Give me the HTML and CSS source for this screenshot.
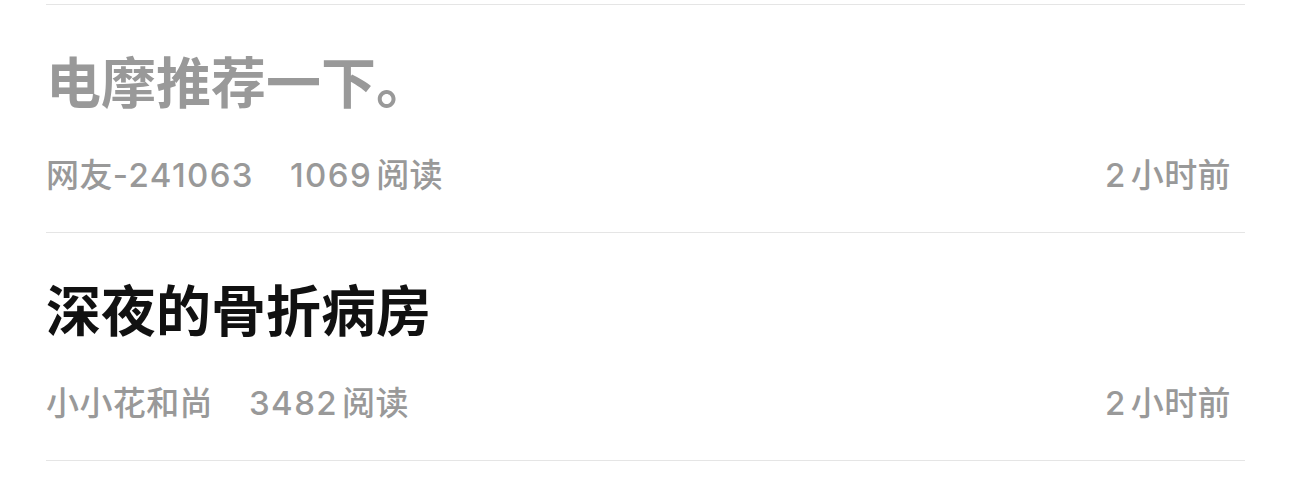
FILE: index.html
```html
<!DOCTYPE html>
<html>
<head>
    <title>帖子列表</title>
    <link rel="stylesheet" href="styles.css">
</head>
<body>
    <div class="post-list">
        <div class="post-item visited">
            <h2 class="post-title">电摩推荐一下。</h2>
            <div class="post-meta">
                <span class="author">网友-<span class="num">241063</span></span>
                <span class="reads"><span class="num">1069</span>阅读</span>
                <span class="time"><span class="num">2</span>小时前</span>
            </div>
        </div>
        <div class="post-item">
            <h2 class="post-title">深夜的骨折病房</h2>
            <div class="post-meta">
                <span class="author">小小花和尚</span>
                <span class="reads"><span class="num">3482</span>阅读</span>
                <span class="time"><span class="num">2</span>小时前</span>
            </div>
        </div>
    </div>
</body>
</html>
```

FILE: styles.css
```css
body {
    margin: 0;
    background-color: #fff;
    font-family: "Noto Sans CJK SC", "Noto Sans", sans-serif;
}
.post-list {
    padding: 4px 0 0 46px;
    width: 1199px;
}
.post-item {
    border-top: 1px solid #e5e5e5;
    padding: 36px 14px 35px 0;
}
.post-item:last-child {
    border-bottom: 1px solid #e5e5e5;
}
.post-title {
    margin: 0;
    font-size: 55px;
    line-height: 76px;
    font-weight: 700;
    color: #111;
}
.visited .post-title {
    color: #999;
}
.post-meta {
    display: flex;
    margin-top: 36px;
    font-family: Inter, "Noto Sans CJK SC", sans-serif;
    font-size: 33px;
    line-height: 44px;
    font-weight: 500;
    letter-spacing: 0.4px;
    color: #999;
}
.num {
    letter-spacing: 1.4px;
    margin-right: 4px;
}
.author .num {
    margin-right: 0;
}
.reads {
    margin-left: 36px;
}
.time {
    margin-left: auto;
}
```
